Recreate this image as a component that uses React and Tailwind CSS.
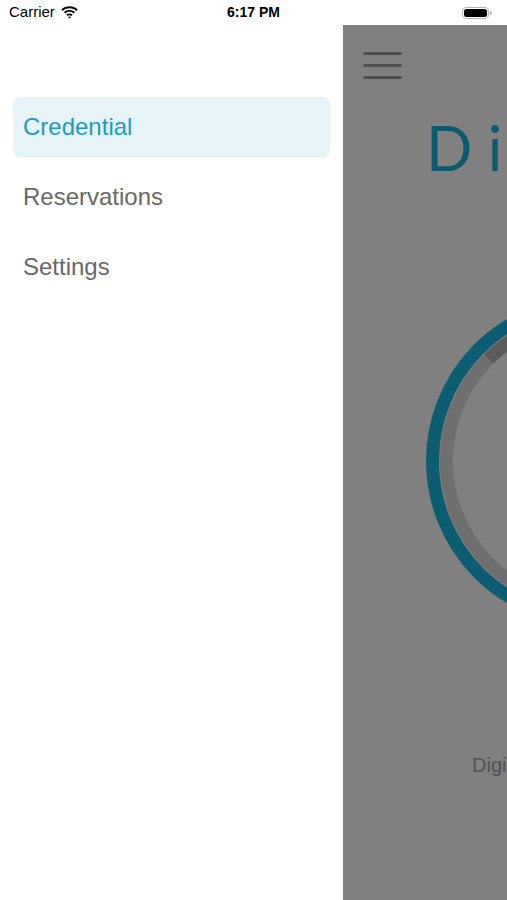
import React from "react";

const menu = [
  { label: "Credential", active: true },
  { label: "Reservations" },
  { label: "Settings" },
];

function StatusBar() {
  return (
    <div className="relative flex h-[25px] items-center bg-white px-[9px] text-[15px] text-black">
      <div className="flex items-center gap-[6px]">
        <span>Carrier</span>
        <svg width="17" height="13" viewBox="0 0 17 13">
          <path d="M8.5 2.2c2.6 0 5 1 6.8 2.7l1.3-1.4C14.4 1.4 11.6.3 8.5.3S2.6 1.4.4 3.5l1.3 1.4C3.5 3.2 5.9 2.2 8.5 2.2z" fill="#000" />
          <path d="M8.5 5.8c1.6 0 3.1.6 4.2 1.6L14 6C12.5 4.7 10.6 3.9 8.5 3.9S4.5 4.7 3 6l1.3 1.4c1.1-1 2.6-1.6 4.2-1.6z" fill="#000" />
          <path d="M8.5 9.3c.7 0 1.3.3 1.8.7l1.4-1.4c-.9-.8-2-1.2-3.2-1.2s-2.3.4-3.2 1.2L6.7 10c.5-.4 1.1-.7 1.8-.7zM8.5 12.6l1.5-1.6c-.4-.4-.9-.6-1.5-.6s-1.1.2-1.5.6z" fill="#000" />
        </svg>
      </div>
      <div className="absolute left-0 right-0 top-0 flex h-[25px] items-center justify-center text-[14px] font-bold">
        6:17 PM
      </div>
      <div className="ml-auto flex items-center pr-[6px]">
        <div className="flex h-[12px] w-[27px] items-center rounded-[4px] border border-[#b5b5b5] p-[1px]">
          <div className="h-full w-full rounded-[2.5px] bg-black" />
        </div>
        <div className="ml-[1px] h-[4px] w-[2px] rounded-r-sm bg-[#b5b5b5]" />
      </div>
    </div>
  );
}

function Drawer() {
  return (
    <div className="flex w-[343px] shrink-0 flex-col gap-[10px] bg-white px-[13px] pt-[72px]">
      {menu.map((m) => (
        <div
          key={m.label}
          className={
            "flex h-[60px] items-center rounded-[7px] px-[10px] text-[24px] " +
            (m.active ? "bg-[#e6f4f8] text-[#1e9bbf]" : "text-[#686868]")
          }
        >
          {m.label}
        </div>
      ))}
    </div>
  );
}

function MainPanel() {
  return (
    <div className="flex-1 overflow-hidden bg-[#808080]">
      <div className="flex w-[507px] flex-col">
        {/* hamburger */}
        <div className="flex w-[39px] flex-col gap-[9px] pl-[20px] pt-[27px] box-content">
          <div className="h-[3px] w-[39px] rounded-full bg-[#4f4f4f]" />
          <div className="h-[3px] w-[39px] rounded-full bg-[#4f4f4f]" />
          <div className="h-[3px] w-[39px] rounded-full bg-[#4f4f4f]" />
        </div>
        <div
          className="whitespace-nowrap pl-[83px] pt-[34px] text-[61px] leading-[70px] font-normal tracking-[16px] text-[#0b5b70]"
          style={{ fontFamily: "Lato, 'Open Sans', sans-serif" }}
        >
          Digital
        </div>
        <div className="pl-[83px] pt-[113px]">
          <svg width="330" height="330" viewBox="0 0 330 330">
            <circle cx="165" cy="165" r="158.5" fill="none" stroke="#0c5d72" strokeWidth="13" />
            <circle cx="165" cy="165" r="144.5" fill="none" stroke="#6f6f6f" strokeWidth="13" />
            <path
              d="M 62.8 62.8 A 144.5 144.5 0 0 1 165 20.5"
              fill="none"
              stroke="#5b5b5b"
              strokeWidth="13"
            />
          </svg>
        </div>
        <div className="whitespace-nowrap pl-[129px] pt-[124px] text-[20px] text-[#525252]">
          Digital Key
        </div>
      </div>
    </div>
  );
}

export default function App() {
  return (
    <div
      className="flex h-[900px] w-[507px] flex-col overflow-hidden bg-white"
      style={{ fontFamily: "'Liberation Sans', Arial, sans-serif" }}
    >
      <StatusBar />
      <div className="flex flex-1 overflow-hidden">
        <Drawer />
        <MainPanel />
      </div>
    </div>
  );
}
